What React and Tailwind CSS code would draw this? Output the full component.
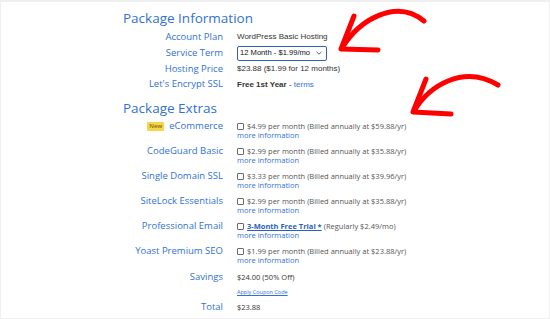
const info = [
  { label: "Account Plan", h: "h-[16px]", kind: "plan" },
  { label: "Service Term", h: "h-[16px]", kind: "term" },
  { label: "Hosting Price", h: "h-[16px]", kind: "price" },
  { label: "Let's Encrypt SSL", h: "h-[15px]", kind: "ssl" },
];

const extras = [
  { label: "eCommerce", isNew: true, text: "$4.99 per month (Billed annually at $59.88/yr)" },
  { label: "CodeGuard Basic", text: "$2.99 per month (Billed annually at $35.88/yr)" },
  { label: "Single Domain SSL", text: "$3.33 per month (Billed annually at $39.96/yr)" },
  { label: "SiteLock Essentials", text: "$2.99 per month (Billed annually at $35.88/yr)" },
  { label: "Professional Email", trial: true },
  { label: "Yoast Premium SEO", text: "$1.99 per month (Billed annually at $23.88/yr)" },
];

const labelCls =
  "w-[222px] shrink-0 text-right text-[9.5px] text-[#3171d6] font-['Open_Sans',sans-serif]";

const InfoValue = ({ kind }) => {
  if (kind === "plan") return <span>WordPress Basic Hosting</span>;
  if (kind === "term")
    return (
      <div className="w-[90px] h-[15px] border border-[#2f62b8] rounded-[2px] flex items-center justify-between pl-[2px] pr-[4px] text-[#111] text-[7.6px]">
        <span>12 Month - $1.99/mo</span>
        <svg width="6" height="4" viewBox="0 0 6 4">
          <path d="M0.5 0.8 L3 3.2 L5.5 0.8" fill="none" stroke="#555" strokeWidth="0.9" />
        </svg>
      </div>
    );
  if (kind === "price") return <span>$23.88 ($1.99 for 12 months)</span>;
  return (
    <span>
      <span className="font-semibold">Free 1st Year</span> -{" "}
      <span className="text-[#3171d6]">terms</span>
    </span>
  );
};

const Checkbox = () => (
  <span className="inline-block w-[7px] h-[7px] border border-[#6b6b6b] rounded-[1px] mr-[3px] shrink-0" />
);

export default function App() {
  return (
    <div className="relative w-[550px] h-[319px] bg-white border border-t-2 border-[#efefef] overflow-hidden font-['Open_Sans',sans-serif]">
      <div className="pl-[122px] pt-[6px] h-[27px] text-[13.5px] leading-[20px] text-[#3171d6]">
        Package Information
      </div>

      {info.map((r) => (
        <div key={r.label} className={`flex items-center ${r.h}`}>
          <div className={labelCls}>{r.label}</div>
          <div className="ml-[14px] text-[8px] text-[#333] font-['Liberation_Sans',sans-serif]">
            <InfoValue kind={r.kind} />
          </div>
        </div>
      ))}

      <div className="pl-[122px] mt-[6px] h-[23px] text-[13.5px] leading-[20px] text-[#3171d6]">
        Package Extras
      </div>

      {extras.map((r) => (
        <div key={r.label} className="flex h-[25px]">
          <div className={`${labelCls} leading-[10px] flex justify-end items-center h-[10px]`}>
            {r.isNew && (
              <span className="mr-[5px] px-[2px] h-[9px] leading-[9px] rounded-[1px] bg-[#f6d44b] text-[#8a6a10] text-[6px] font-semibold">
                New
              </span>
            )}
            {r.label}
          </div>
          <div className="ml-[14px] text-[7.5px] leading-[10px] text-[#555]">
            <div className="flex items-center h-[10px]">
              <Checkbox />
              {r.trial ? (
                <span>
                  <span className="text-[#2a5fc0] font-bold underline">3-Month Free Trial *</span>{" "}
                  (Regularly $2.49/mo)
                </span>
              ) : (
                <span>{r.text}</span>
              )}
            </div>
            <div className="text-[#3171d6] h-[9px] leading-[9px]">more information</div>
          </div>
        </div>
      ))}

      <div className="flex items-center h-[13px]">
        <div className={labelCls}>Savings</div>
        <div className="ml-[14px] text-[7.5px] text-[#333] font-medium">$24.00 (50% Off)</div>
      </div>
      <div className="flex items-center h-[17px]">
        <div className="w-[222px] shrink-0" />
        <div className="ml-[14px] text-[5.5px] text-[#3171d6] underline">Apply Coupon Code</div>
      </div>
      <div className="flex items-center h-[13px]">
        <div className={labelCls}>Total</div>
        <div className="ml-[14px] text-[7.5px] text-[#333] font-medium">$23.88</div>
      </div>

      <svg
        className="absolute inset-0 pointer-events-none"
        width="550"
        height="319"
        viewBox="0 0 550 319"
      >
        <g fill="none" stroke="#ff0000" strokeWidth="5" strokeLinecap="round" strokeLinejoin="round">
          <path d="M341 46 C358 18 395 -4 423 19" />
          <path d="M353 14 L340 47 L377 48" />
          <path d="M413 109 C428 84 462 62 497 83" />
          <path d="M425 77 L412 110 L450 112" />
        </g>
      </svg>
    </div>
  );
}
